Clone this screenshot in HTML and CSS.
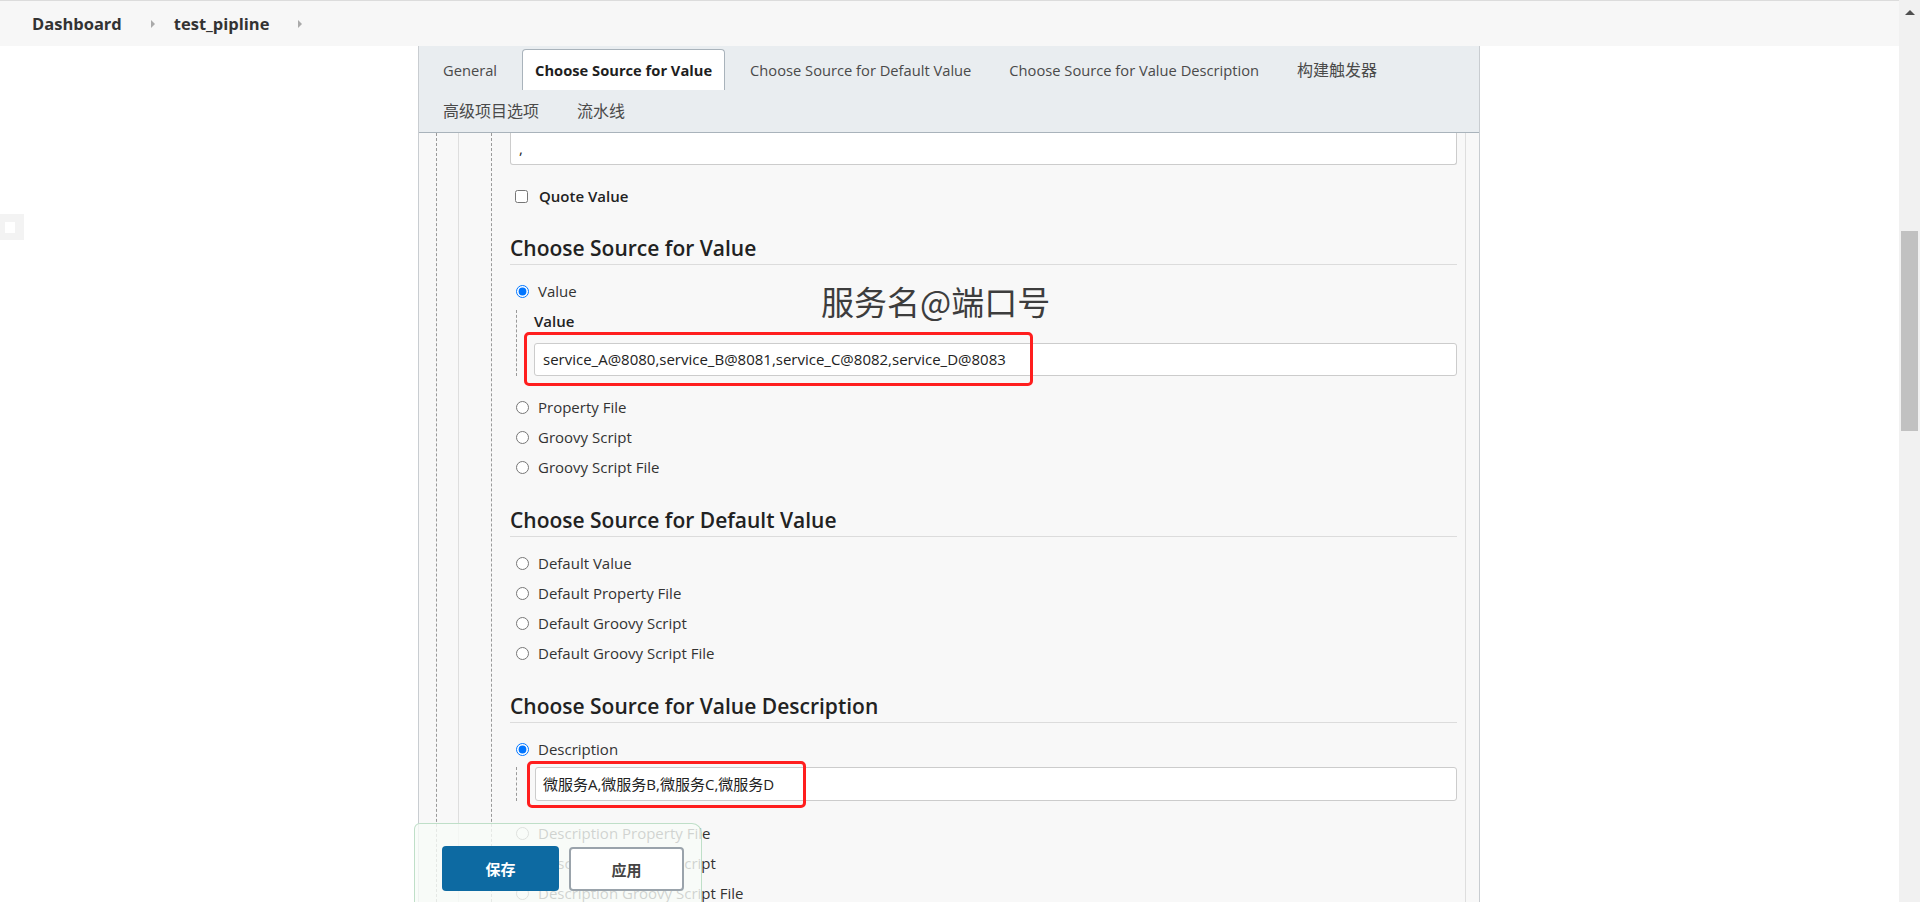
FILE: index.html
```html
<!DOCTYPE html>
<html lang="zh">
<head>
<meta charset="utf-8">
<title>test_pipline Config</title>
<link rel="stylesheet" href="styles.css">
</head>
<body>
<div class="app">
  <div class="main">
    <header class="breadcrumb">
      <a class="crumb">Dashboard</a>
      <span class="chev"></span>
      <a class="crumb">test_pipline</a>
      <span class="chev"></span>
    </header>
    <div class="side-toggle"><span></span></div>
    <div class="page">
      <div class="panel">
        <nav class="tabs">
          <span class="tab">General</span>
          <span class="tab active">Choose Source for Value</span>
          <span class="tab">Choose Source for Default Value</span>
          <span class="tab">Choose Source for Value Description</span>
          <span class="tab cjk">构建触发器</span>
          <span class="tab cjk">高级项目选项</span>
          <span class="tab cjk">流水线</span>
        </nav>
        <div class="body">
          <div class="dash-outer">
            <div class="box">
              <div class="dash-inner">
                <div class="content">
                  <div class="field first">,</div>
                  <label class="check-row"><input type="checkbox"><span>Quote Value</span></label>

                  <h3 class="section first-section">Choose Source for Value</h3>
                  <label class="radio-row"><input type="radio" name="v" checked><span>Value</span></label>
                  <div class="nested">
                    <div class="nested-label">Value</div>
                    <div class="field">service_A@8080,service_B@8081,service_C@8082,service_D@8083</div>
                    <div class="annot-box value-box"></div>
                    <div class="annot-text">服务名@端口号</div>
                  </div>
                  <label class="radio-row gap"><input type="radio" name="v"><span>Property File</span></label>
                  <label class="radio-row"><input type="radio" name="v"><span>Groovy Script</span></label>
                  <label class="radio-row"><input type="radio" name="v"><span>Groovy Script File</span></label>

                  <h3 class="section">Choose Source for Default Value</h3>
                  <label class="radio-row"><input type="radio" name="d"><span>Default Value</span></label>
                  <label class="radio-row"><input type="radio" name="d"><span>Default Property File</span></label>
                  <label class="radio-row"><input type="radio" name="d"><span>Default Groovy Script</span></label>
                  <label class="radio-row"><input type="radio" name="d"><span>Default Groovy Script File</span></label>

                  <h3 class="section">Choose Source for Value Description</h3>
                  <label class="radio-row"><input type="radio" name="s" checked><span>Description</span></label>
                  <div class="nested desc">
                    <div class="field">微服务A,微服务B,微服务C,微服务D</div>
                    <div class="annot-box desc-box"></div>
                  </div>
                  <label class="radio-row gap2"><input type="radio" name="s"><span>Description Property File</span></label>
                  <label class="radio-row"><input type="radio" name="s"><span>Description Groovy Script</span></label>
                  <label class="radio-row"><input type="radio" name="s"><span>Description Groovy Script File</span></label>
                </div>
              </div>
            </div>
          </div>
        </div>
      </div>
    </div>
    <div class="bottom-bar">
      <button class="btn primary">保存</button>
      <button class="btn secondary">应用</button>
    </div>
  </div>
  <div class="scrollbar">
    <div class="arrow"></div>
    <div class="thumb"></div>
  </div>
</div>
</body>
</html>
```
FILE: styles.css
```css
html, body {
  margin: 0;
  height: 100%;
  overflow: hidden;
}
body {
  font-family: "Open Sans", "Noto Sans CJK SC", sans-serif;
  font-size: 15px;
  color: #333;
  background: #fff;
}
.app {
  display: flex;
  height: 902px;
}
.main {
  flex: 1;
  display: flex;
  flex-direction: column;
  min-width: 0;
  position: relative;
}
.breadcrumb {
  height: 45px;
  border-top: 1px solid #dcdcdc;
  background: #f7f7f7;
  display: flex;
  align-items: center;
  padding-left: 32px;
  flex-shrink: 0;
}
.crumb {
  font-size: 16.5px;
  font-weight: 700;
  color: #333;
}
.chev {
  width: 0;
  height: 0;
  border-top: 4px solid transparent;
  border-bottom: 4px solid transparent;
  border-left: 4px solid #aaa;
  margin: 0 19px 0 29px;
}
.side-toggle {
  position: absolute;
  left: 0;
  top: 214px;
  width: 24px;
  height: 26px;
  background: #f3f3f3;
  display: flex;
  align-items: center;
  justify-content: center;
}
.side-toggle span {
  width: 10px;
  height: 11px;
  background: #fff;
  margin-right: 4px;
}
.page {
  flex: 1;
  min-height: 0;
}
.panel {
  width: 1060px;
  margin: 0 0 0 418px;
  height: 100%;
  border-left: 1px solid #c9cdd1;
  border-right: 1px solid #c9cdd1;
  background: #f8f8f8;
  display: flex;
  flex-direction: column;
}
.tabs {
  background: #e9edf0;
  border-bottom: 1px solid #a9b3bb;
  display: flex;
  flex-wrap: wrap;
  padding: 3px 0 1px 5px;
  flex-shrink: 0;
}
.tab {
  height: 40px;
  line-height: 40px;
  padding: 0 12px;
  margin: 0 6px;
  border: 1px solid transparent;
  border-bottom: none;
  border-radius: 4px 4px 0 0;
  color: #4a4a4a;
  white-space: nowrap;
  font-size: 14.7px;
}
.tab.cjk {
  font-size: 16px;
}
.tab.active {
  background: #fff;
  border-color: #a9b3bb;
  color: #1e1e1e;
  font-weight: 700;
}
.body {
  flex: 1;
  padding-left: 17px;
  padding-right: 13px;
  overflow: hidden;
}
.dash-outer {
  border-left: 1px dashed #9a9a9a;
  padding-left: 21px;
  height: 100%;
}
.box {
  border-left: 1px solid #dedede;
  border-right: 1px solid #dedede;
  padding-left: 32px;
  padding-right: 8px;
  height: 100%;
}
.dash-inner {
  border-left: 1px dashed #9a9a9a;
  padding-left: 18px;
  height: 100%;
}
.content {
  display: flex;
  flex-direction: column;
}
.field {
  height: 31px;
  line-height: 31px;
  background: #fff;
  border: 1px solid #cccccc;
  border-radius: 3px;
  padding-left: 8px;
  color: #222;
  white-space: nowrap;
}
.field.first {
  border-top: none;
  border-radius: 0 0 3px 3px;
  height: 31px;
}
.check-row,
.radio-row {
  display: flex;
  align-items: center;
  height: 30px;
}
.check-row {
  margin-top: 16px;
}
.check-row input {
  margin: 0 11px 0 5px;
  width: 13px;
  height: 13px;
}
.check-row span {
  font-weight: 600;
  color: #222;
}
.radio-row input {
  margin: 0 9px 0 6px;
  width: 13px;
  height: 13px;
}
.radio-row span {
  color: #333;
}
.section {
  margin: 24px 0 11px;
  font-size: 21px;
  font-weight: 600;
  line-height: 28px;
  padding-bottom: 2px;
  border-bottom: 1px solid #dcdcdc;
  color: #222;
}
.section.first-section {
  margin-top: 23px;
}
.nested {
  position: relative;
  margin-left: 6px;
  border-left: 1px dashed #9a9a9a;
  padding-left: 17px;
  margin-top: 4px;
}
.nested-label {
  font-weight: 600;
  line-height: 22px;
  margin-bottom: 11px;
  color: #222;
}
.nested.desc {
  margin-top: 3px;
  padding-left: 18px;
}
.nested.desc .field {
  height: 32px;
  line-height: 32px;
  padding-left: 7px;
}
.radio-row.gap {
  margin-top: 16px;
}
.radio-row.gap2 {
  margin-top: 17px;
}
.annot-box {
  position: absolute;
  border: 3px solid #ff1e1e;
  border-radius: 5px;
  box-sizing: border-box;
}
.value-box {
  left: 7px;
  top: 22px;
  width: 509px;
  height: 54px;
}
.desc-box {
  left: 10px;
  top: -6px;
  width: 279px;
  height: 47px;
}
.annot-text {
  position: absolute;
  left: 304px;
  top: -29px;
  font-family: "Noto Sans CJK SC", sans-serif;
  font-size: 33px;
  line-height: 40px;
  color: #3d3d3d;
  white-space: nowrap;
}
.bottom-bar {
  position: absolute;
  left: 414px;
  bottom: 0;
  width: 288px;
  height: 79px;
  box-sizing: border-box;
  border: 1px solid #bfdfc8;
  border-bottom: none;
  border-radius: 6px 10px 0 0;
  background: rgba(247, 251, 247, 0.8);
  padding: 22px 0 0 27px;
  display: flex;
  gap: 10px;
  align-items: flex-start;
}
.btn {
  font-family: "Noto Sans CJK SC", sans-serif;
  font-size: 15px;
  font-weight: 700;
  border-radius: 4px;
  cursor: pointer;
}
.btn.primary {
  width: 117px;
  height: 45px;
  background: #0d6aa2;
  color: #fff;
  border: none;
}
.btn.secondary {
  width: 115px;
  height: 44px;
  background: #fff;
  color: #444;
  border: 2px solid #9aa3ab;
  margin-top: 1px;
}
.scrollbar {
  width: 21px;
  background: #f1f1f1;
  position: relative;
  flex-shrink: 0;
}
.arrow {
  position: absolute;
  left: 6px;
  top: 10px;
  width: 0;
  height: 0;
  border-left: 5px solid transparent;
  border-right: 5px solid transparent;
  border-bottom: 5px solid #505050;
}
.thumb {
  position: absolute;
  left: 2px;
  right: 2px;
  top: 231px;
  height: 200px;
  background: #c1c1c1;
}
```
